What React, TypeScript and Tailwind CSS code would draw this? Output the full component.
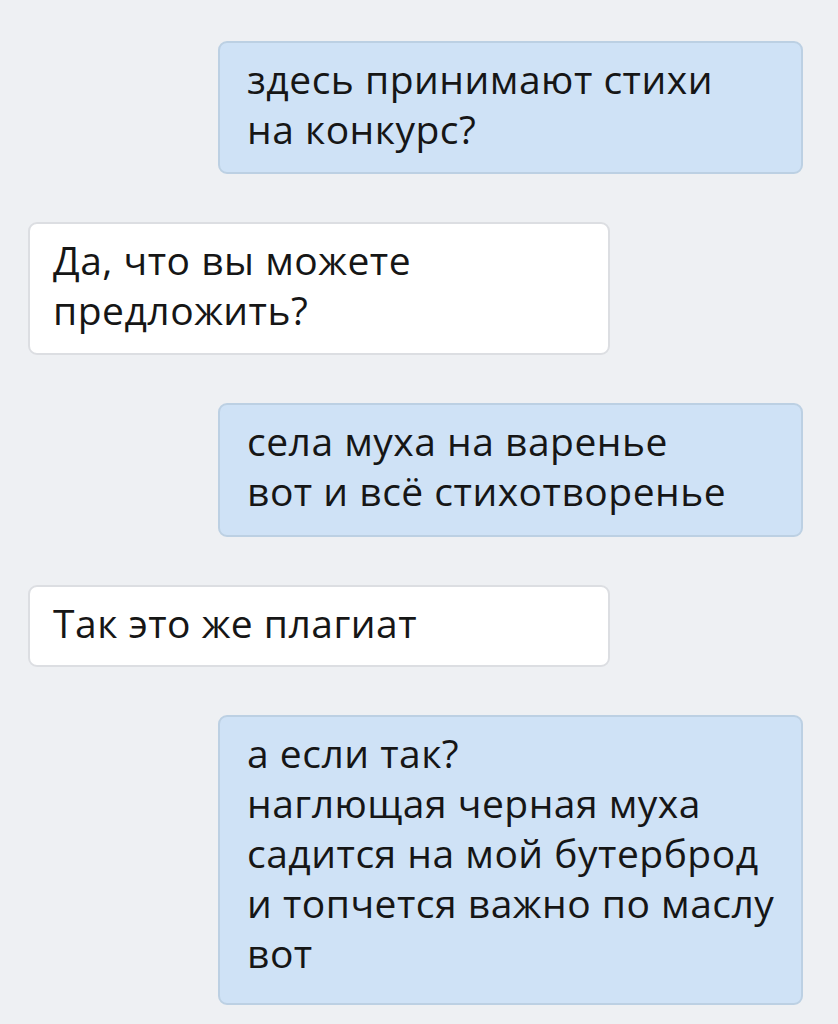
import React from "react";

type Msg = { out: boolean; lines: string[]; pb: string };

const messages: Msg[] = [
  { out: true, lines: ["здесь принимают стихи", "на конкурс?"], pb: "pb-[18px]" },
  { out: false, lines: ["Да, что вы можете", "предложить?"], pb: "pb-[18px]" },
  { out: true, lines: ["села муха на варенье", "вот и всё стихотворенье"], pb: "pb-[19px]" },
  { out: false, lines: ["Так это же плагиат"], pb: "pb-[17px]" },
  {
    out: true,
    lines: [
      "а если так?",
      "наглющая черная муха",
      "садится на мой бутерброд",
      "и топчется важно по маслу",
      "вот",
    ],
    pb: "pb-[25px]",
  },
];

function Bubble({ msg }: { msg: Msg }) {
  return (
    <div
      className={
        (msg.out
          ? "ml-[218px] w-[585px] border-[#bcd0e3] bg-[#cfe2f6] pl-[27px] "
          : "ml-[28px] w-[582px] border-[#dcdee2] bg-white pl-[23px] ") +
        "rounded-[9px] border-2 pt-[11px] " +
        msg.pb
      }
    >
      {msg.lines.map((line, i) => (
        <div key={i} className="h-[50px] leading-[50px]">
          {line}
        </div>
      ))}
    </div>
  );
}

export default function App() {
  return (
    <div
      className="flex min-h-[1024px] w-[838px] flex-col gap-12 bg-[#eef0f3] pt-[41px] text-[39px] tracking-[0.5px] text-[#161616]"
      style={{ fontFamily: '"Open Sans", sans-serif' }}
    >
      {messages.map((m, i) => (
        <Bubble key={i} msg={m} />
      ))}
    </div>
  );
}
